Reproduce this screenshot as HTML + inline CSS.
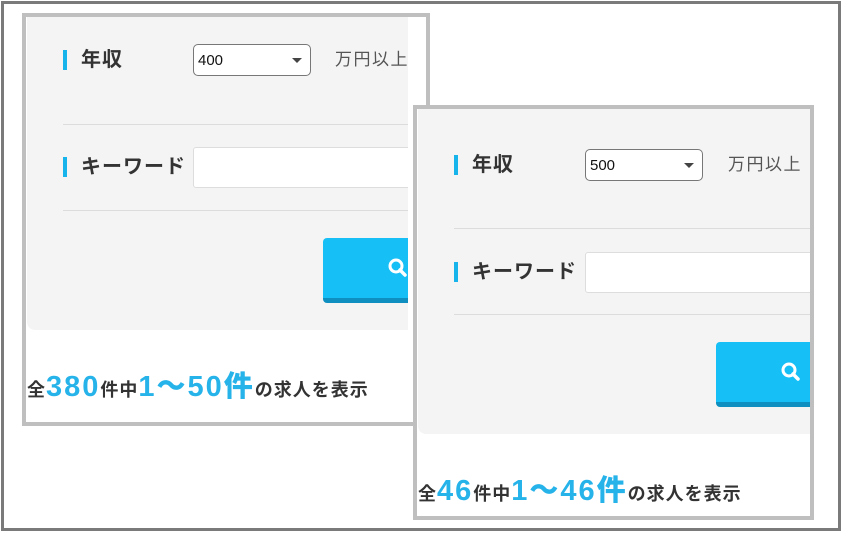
<!DOCTYPE html>
<html><head><meta charset="utf-8"><style>
*{margin:0;padding:0;box-sizing:border-box}
body{width:846px;height:538px;background:#fff;position:relative;overflow:hidden;font-family:"Liberation Sans","Noto Sans CJK JP",sans-serif}
.frame{position:absolute;left:1px;top:1px;width:840px;height:530px;border:3px solid #7a7a7a;background:#fff}
.panel{position:absolute;border:4px solid #bfbfbf;background:#fff}
.clip{position:absolute;left:0;top:0;overflow:hidden;height:100%}
.a{position:absolute}
.gray{background:#f4f4f4;border-radius:0 0 0 8px}
.bar{width:4px;height:20px;background:#17b4ec}
.lab{font-weight:bold;font-size:20px;color:#333;line-height:20px;letter-spacing:1px;white-space:nowrap}
.sel{background:#fff;border:1px solid #777;border-radius:5px;font-size:15px;color:#111;padding:7px 0 0 4px}
.sel:after{content:"";position:absolute;right:8px;top:13px;border-left:5px solid transparent;border-right:5px solid transparent;border-top:5px solid #444}
.unit{font-size:17px;color:#555;letter-spacing:1.5px;white-space:nowrap;line-height:20px}
.line{height:1px;background:#dcdcdc}
.inp{background:#fff;border:1px solid #ddd;border-radius:3px}
.btn{background:#16bff6;border-bottom:5px solid #0f8fbf;border-radius:4px}
.res{font-size:18px;font-weight:bold;color:#333;white-space:nowrap;line-height:30px;letter-spacing:1px}
.res b{font-size:29px;color:#26b3ea;letter-spacing:2px}
</style></head><body>
<div class="frame"></div>

<div class="panel" style="left:22px;top:13px;width:408px;height:413px">
 <div class="clip" style="width:382px">
  <div class="a gray" style="left:1px;top:0;width:400px;height:313px"></div>
  <div class="a bar" style="left:37px;top:33px"></div>
  <div class="a lab" style="left:55px;top:33px">年収</div>
  <div class="a sel" style="left:167px;top:27px;width:118px;height:32px">400</div>
  <div class="a unit" style="left:309px;top:33px">万円以上</div>
  <div class="a line" style="left:37px;top:107px;width:400px"></div>
  <div class="a bar" style="left:37px;top:140px"></div>
  <div class="a lab" style="left:55px;top:140px">キーワード</div>
  <div class="a inp" style="left:167px;top:130px;width:300px;height:41px"></div>
  <div class="a line" style="left:37px;top:193px;width:400px"></div>
  <div class="a btn" style="left:297px;top:221px;width:200px;height:65px">
   <svg class="a" style="left:64px;top:19px" width="22" height="22" viewBox="0 0 22 22"><circle cx="9" cy="9" r="6" fill="none" stroke="#fff" stroke-width="3"/><path d="M13 13l5 5" stroke="#fff" stroke-width="3.5" stroke-linecap="round"/></svg>
  </div>
  <div class="a res" style="left:1px;top:355px">全<b>380</b>件中<b>1～50件</b>の求人を表示</div>
 </div>
</div>

<div class="panel" style="left:413px;top:105px;width:401px;height:415px">
 <div class="clip" style="width:393px">
  <div class="a gray" style="left:1px;top:0;width:400px;height:325px"></div>
  <div class="a bar" style="left:37px;top:46px"></div>
  <div class="a lab" style="left:55px;top:46px">年収</div>
  <div class="a sel" style="left:168px;top:40px;width:118px;height:32px">500</div>
  <div class="a unit" style="left:311px;top:46px">万円以上</div>
  <div class="a line" style="left:37px;top:119px;width:400px"></div>
  <div class="a bar" style="left:37px;top:153px"></div>
  <div class="a lab" style="left:55px;top:153px">キーワード</div>
  <div class="a inp" style="left:168px;top:143px;width:300px;height:41px"></div>
  <div class="a line" style="left:37px;top:205px;width:400px"></div>
  <div class="a btn" style="left:299px;top:233px;width:200px;height:65px">
   <svg class="a" style="left:64px;top:19px" width="22" height="22" viewBox="0 0 22 22"><circle cx="9" cy="9" r="6" fill="none" stroke="#fff" stroke-width="3"/><path d="M13 13l5 5" stroke="#fff" stroke-width="3.5" stroke-linecap="round"/></svg>
  </div>
  <div class="a res" style="left:1px;top:367px">全<b>46</b>件中<b>1～46件</b>の求人を表示</div>
 </div>
</div>
</body></html>
